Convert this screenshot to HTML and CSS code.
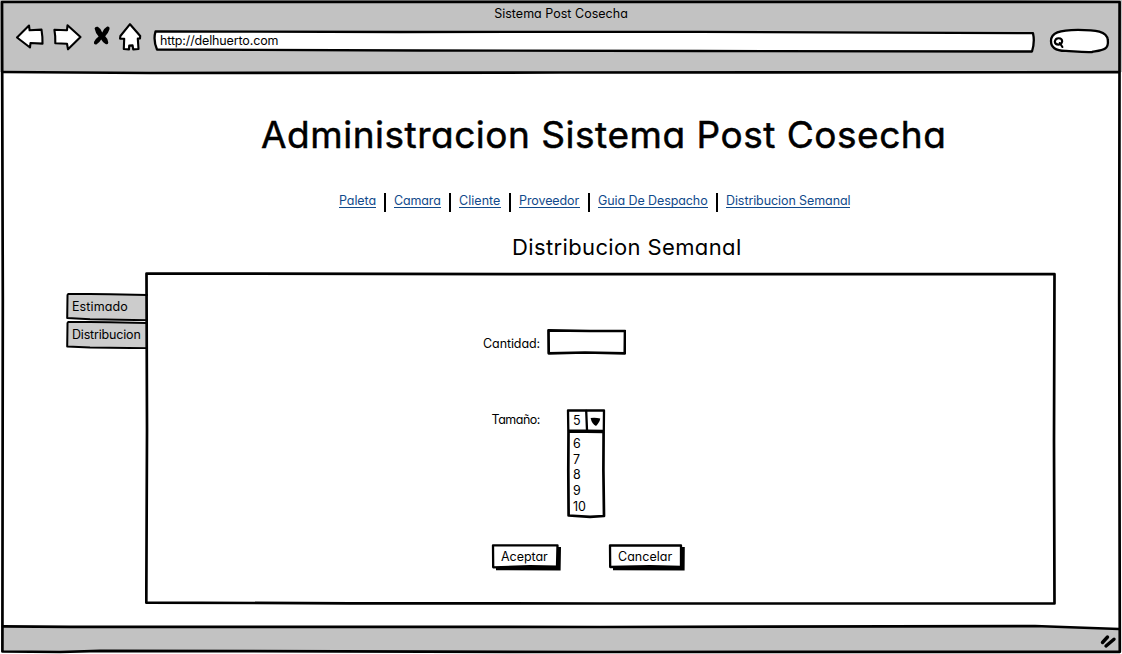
FILE: index.html
```
<!DOCTYPE html>
<html lang="es">
<head>
<meta charset="utf-8">
<title>Sistema Post Cosecha</title>
<link rel="stylesheet" href="styles.css">
</head>
<body>
<div class="window">
  <header class="chrome">
    <div class="window-title"><span>Sistema Post Cosecha</span></div>
    <div class="toolbar">
      <svg class="nav-icons" width="132" height="32" viewBox="12 22 132 32">
        <g class="sketch-icon">
          <path d="M17 37.5 L29 25.5 L29.6 30.3 L41.5 29.6 Q42.7 37 42.5 43.6 L30.5 43 L30 47.5 Z"/>
          <path d="M54.4 29.8 L67 30.2 L67.5 25.3 L80.5 37 L68 49.3 L67 43.8 L55.3 43.2 Q55.6 36 54.4 29.8 Z"/>
          <path d="M130 24.2 L140.2 36 L140 38.5 L137.8 38.6 L138.5 49 L133.2 49.4 L132.6 45.4 L129.2 45.6 L129 49.4 L123.8 49 L124.2 38.8 L120 38.6 L120.4 36 Z"/>
        </g>
        <path class="stop" d="M94.6 28.6 Q95 26.2 97.8 26.8 Q100.8 28.4 102.2 32.6 Q104 28 107.2 26.4 Q110.2 26.2 109.4 29.4 Q108 33.6 105.2 36.2 Q107.8 38.4 108.3 42.4 Q107.8 45.4 105.2 43.8 Q102.6 42.2 101.2 39.6 Q99.4 43 96.4 44.4 Q93.2 44.8 94.2 41.6 Q95.6 38.6 98.6 36.4 Q95.4 33.2 94.6 28.6 Z"/>
      </svg>
      <div class="address">
        <svg class="outline" width="884" height="26" viewBox="152 28 884 26">
          <path class="paper line2" d="M155.5 31.5 L400 32 L700 31.8 L1033 33.2 Q1035 42 1032 51.5 L700 51 L420 50.5 L157 49.5 Q153 40 155.5 31.5 Z"/>
        </svg>
        <span>http://delhuerto.com</span>
      </div>
      <svg class="search" width="64" height="28" viewBox="1048 27 64 28">
        <path class="paper line2" d="M1051 41 C1051 33 1059 29.8 1078 29.8 C1096 29.8 1107 31.5 1107.8 40 C1109 50 1103 50 1092 52 C1082 52.4 1074 51.2 1066 50.8 C1055 51 1051 47 1051 41 Z"/>
        <path class="lens" d="M1054.8 41.6 Q1055.4 38 1058.8 38.2 Q1062.2 38.4 1062.2 41.4 Q1061.6 44.6 1058.6 44.6 Q1055 44.6 1054.8 41.6 Z M1059.8 43 L1062.4 47"/>
      </svg>
    </div>
  </header>

  <main class="page">
    <h1>Administracion Sistema Post Cosecha</h1>
    <nav class="links">
      <a class="l1" href="#">Paleta</a><i></i>
      <a class="l2" href="#">Camara</a><i></i>
      <a class="l3" href="#">Cliente</a><i></i>
      <a class="l4" href="#">Proveedor</a><i></i>
      <a class="l5" href="#">Guia De Despacho</a><i></i>
      <a class="l6" href="#">Distribucion Semanal</a>
    </nav>
    <h2>Distribucion Semanal</h2>
    <div class="workspace">
      <div class="tabs">
        <div class="tab">
          <svg class="outline" width="84" height="28" viewBox="64 293 84 28">
            <path class="tab-shape" d="M147 295 L110 294.2 L69 293.8 Q67.3 294 67.5 296 L67.2 318 L90 319.2 L147 320.2"/>
          </svg>
          <span class="t1">Estimado</span>
        </div>
        <div class="tab">
          <svg class="outline" width="84" height="28" viewBox="64 293 84 28">
            <path class="tab-shape" d="M147 295 L110 294.2 L69 293.8 Q67.3 294 67.5 296 L67.2 318.4 L90 319.5 L147 320.2"/>
          </svg>
          <span class="t2">Distribucion</span>
        </div>
      </div>
      <section class="panel">
        <svg class="outline" width="912" height="334" viewBox="145 272 912 334">
          <path class="line3 hollow" d="M146.5 273.5 L600 274.2 L1054.5 274.2 L1054 440 L1054.5 603.5 L600 603.5 L350 603.3 L146.3 602.6 L147 430 Z"/>
        </svg>
        <form class="form">
          <label class="label-qty" for="cantidad"><span>Cantidad:</span></label>
          <div class="field">
            <svg class="outline" width="80" height="28" viewBox="546 328 80 28">
              <path class="line3 paper" d="M548.5 330.3 L590 331 L625 331 L624.8 353.3 L585 352.5 L548.7 353.3 Z"/>
            </svg>
            <input id="cantidad" type="text">
          </div>
          <label class="label-size"><span>Tamaño:</span></label>
          <div class="combo">
            <svg class="outline" width="42" height="112" viewBox="565 408 42 112">
              <path class="line2 paper" d="M568 410.3 L604 410.5 L603.8 431 L568.3 430.5 Z"/>
              <path class="line2" d="M586.2 411 L587 430"/>
              <path class="arrow" d="M590.6 418 Q595.5 417.2 600.2 418.6 Q600 422 596 426 Q591.8 424 590.6 418 Z"/>
              <path class="line3 paper" d="M568.5 431.5 L603.6 432 L603.4 470 L604 516 L590 516.8 L568.6 515.5 L568.3 470 Z"/>
            </svg>
            <div class="value">5</div>
            <ul class="options">
              <li>6</li><li>7</li><li>8</li><li>9</li><li>10</li>
            </ul>
          </div>
          <div class="actions">
            <button class="btn accept" type="button">
              <svg class="outline" width="72" height="30" viewBox="490 543 72 30">
                <path class="shadow" d="M496 566 L557 566 L557 547 L561 547 L560.6 570.4 L496 570.2 Z"/>
                <path class="line2 paper" d="M493 545.3 L557.5 545.3 L557 566.6 L530 566.2 L493.2 567.3 Z"/>
              </svg>
              <span>Aceptar</span>
            </button>
            <button class="btn cancel" type="button">
              <svg class="outline" width="78" height="30" viewBox="607 543 78 30">
                <path class="shadow" d="M613 566 L681 566 L681 547 L684.8 547 L684.6 570.4 L613 570.2 Z"/>
                <path class="line2 paper" d="M610 545.3 L681 545.5 L681 566.8 L650 566.2 L610.2 567 Z"/>
              </svg>
              <span>Cancelar</span>
            </button>
          </div>
        </form>
      </section>
    </div>
  </main>

  <svg class="frame" width="1122" height="654" viewBox="0 0 1122 654">
    <path class="status" d="M3 626.5 L600 627 L1035 626.3 L1119 629.5 L1119 652 L3 652 Z"/>
    <path class="line3 hollow" d="M2 2 L600 1.8 L1119.6 2 L1119.2 300 L1119.8 651.8 L600 652 L100 650.8 L60 652 L2.4 651.5 L2.8 300 Z"/>
    <path class="line3 hollow" d="M3 72 L150 73 L560 72.5 L1119 72.2"/>
    <path class="line3 hollow" d="M3 626.3 L70 626.8 L600 627 L1035 626 L1119 629"/>
    <path class="grip" d="M1102.5 642.5 L1107.5 637 M1106 646 L1114 639.2"/>
  </svg>
</div>
</body>
</html>
```
FILE: styles.css
```
* { box-sizing: border-box; }
body { margin: 0; background: #fff; }
.window {
  position: relative;
  width: 1122px;
  height: 654px;
  overflow: hidden;
  color: #000;
  font: 400 12.5px/16px Inter, "Open Sans", sans-serif;
  font-feature-settings: "cv11" 1, "calt" 0;
}
svg { display: block; fill: none; stroke-linejoin: round; stroke-linecap: round; }
.line2 { stroke: #000; stroke-width: 2.3; }
.line3 { stroke: #000; stroke-width: 2.7; }
.paper { fill: #fff; }
.hollow { fill: none; }
.arrow, .shadow, .stop { fill: #000; }
.outline { position: absolute; }
.frame { position: absolute; inset: 0; pointer-events: none; }
.status { fill: #c2c2c2; }
.grip { stroke: #000; stroke-width: 3.4; }

.chrome { height: 72px; padding: 6px 0 0; background: #c2c2c2; }
.window-title { height: 16px; text-align: center; letter-spacing: 0.02px; }
.toolbar { display: flex; padding-left: 12px; }
.sketch-icon { fill: #fff; stroke: #000; stroke-width: 2.1; }
.address { position: relative; width: 884px; height: 26px; margin: 6px 12px 0 8px; padding: 5px 0 0 8px; letter-spacing: -0.14px; }
.address .outline { left: 0; top: 0; }
.address span { position: relative; }
.search { margin-top: 5px; }
.lens { stroke: #000; stroke-width: 2.1; }

.page { padding-top: 39px; }
h1, h2 { margin: 0; font-weight: 400; white-space: nowrap; }
h1 { width: 700px; margin-left: 261px; font-size: 37px; line-height: 48px; letter-spacing: 0.52px; -webkit-text-stroke: 0.5px #000; }
.links { display: flex; align-items: flex-start; height: 20px; margin: 33px 0 0 339px; letter-spacing: -0.09px; }
.links a { height: 16px; line-height: 18px; white-space: nowrap; color: #114a8b; text-decoration: none; border-bottom: 1px solid #114a8b; }
.links i { width: 2px; height: 19px; margin: 1px 8px 0; background: #000; }
.l1 { width: 37px; }
.l2 { width: 47px; letter-spacing: -0.15px; }
.l3 { width: 42px; letter-spacing: 0.04px; }
.l4 { width: 61px; }
.l5 { width: 110px; }
.l6 { width: 124px; }
h2 { margin: 21px 0 0 512px; font-size: 22px; line-height: 28px; letter-spacing: 0.37px; }

.workspace { display: flex; margin: 11px 0 0 64px; }
.tabs { width: 81px; padding-top: 21px; }
.tab { position: relative; height: 28px; padding: 6px 0 0 8px; }
.tab .outline { left: 0; top: 0; }
.tab span { position: relative; }
.t1 { letter-spacing: 0.1px; }
.t2 { letter-spacing: -0.18px; }
.tab-shape { fill: #ccc; stroke: #000; stroke-width: 2; }
.panel { position: relative; width: 912px; height: 334px; }
.panel > .outline { left: 0; top: 0; }
.form {
  position: relative;
  display: grid;
  grid-template-columns: 395px auto;
  grid-template-rows: 80px 135px 40px;
  padding-top: 56px;
}
.form label { text-align: right; }
.label-qty { padding-top: 8px; letter-spacing: -0.1px; }
.label-size { padding-top: 4px; letter-spacing: -0.48px; }
.field { position: relative; width: 80px; height: 28px; margin-left: 6px; }
.field .outline { left: 0; top: 0; }
.field input { position: relative; width: 74px; height: 20px; margin: 4px; border: 0; background: transparent; outline: 0; font: inherit; }
.combo { position: relative; width: 42px; height: 112px; margin-left: 25px; padding: 5px 0 0 8px; }
.combo .outline { left: 0; top: 0; }
.value, .options { position: relative; }
.options { margin: 7px 0 0; padding: 0; list-style: none; line-height: 15.7px; }
.actions { grid-column: 1 / 3; display: flex; gap: 45px; padding-left: 345px; }
.btn { position: relative; height: 30px; padding: 0; border: 0; background: none; color: #000; font: inherit; font-feature-settings: inherit; text-align: left; }
.btn .outline { left: 0; top: 0; }
.btn span { position: relative; left: 11px; top: -1px; }
.accept { width: 72px; letter-spacing: -0.04px; }
.cancel { width: 78px; letter-spacing: 0.02px; }
```
